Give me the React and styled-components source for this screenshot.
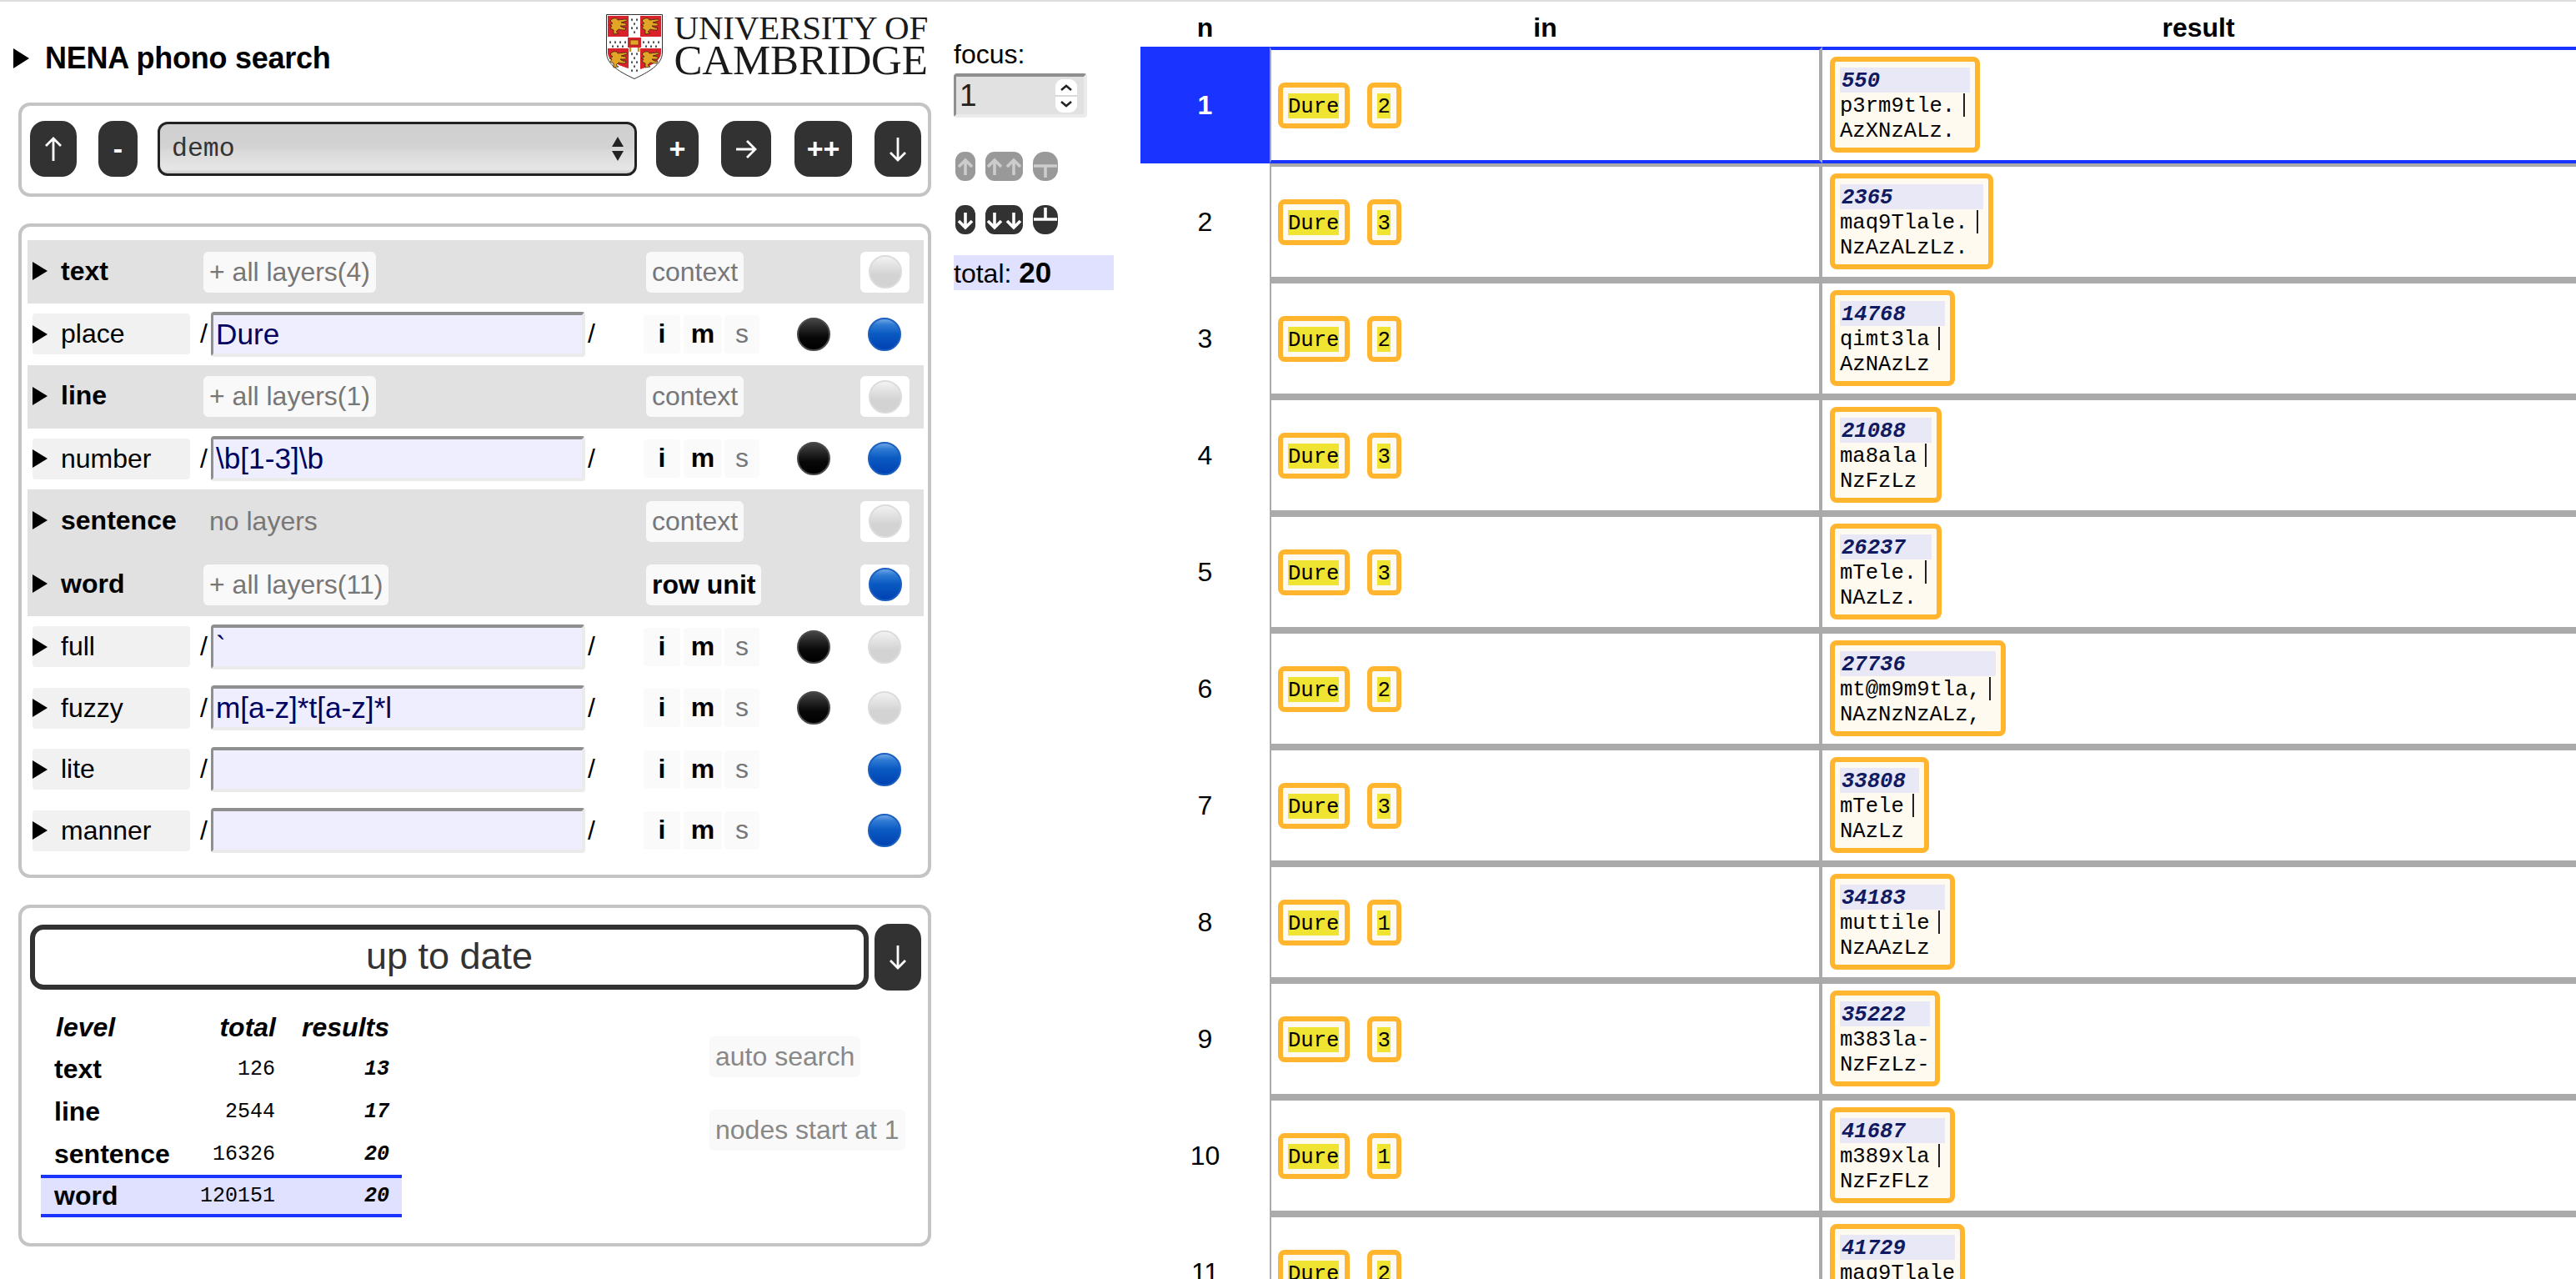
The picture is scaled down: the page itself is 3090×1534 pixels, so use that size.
import React from 'react';
import styled, { createGlobalStyle } from 'styled-components';

const SANS = '"Liberation Sans", Arial, sans-serif';
const MONO = '"Liberation Mono", "Courier New", monospace';
const SERIF = '"Liberation Serif", "Times New Roman", serif';

const Global = createGlobalStyle`
  html, body { margin: 0; padding: 0; background: #fff; overflow: hidden; }
  body { font-family: ${SANS}; color: #000; }
  #root { height: 1534px; overflow: hidden; }
`;

const Page = styled.div`
  display: flex;
  height: 1534px;
  box-sizing: border-box;
  border-top: 2px solid #ddd;
  overflow: hidden;
`;

const LeftCol = styled.div`
  width: 1144px;
  flex: none;
`;

const Header = styled.header`
  display: flex;
  justify-content: space-between;
  height: 121px;
  box-sizing: border-box;
  padding: 15px 31px 0 16px;
`;

const Triangle = styled.span`
  display: block;
  flex: none;
  width: 0;
  height: 0;
  border-left: ${p => p.$w || 18}px solid #000;
  border-top: ${p => p.$h || 11}px solid transparent;
  border-bottom: ${p => p.$h || 11}px solid transparent;
`;

const Title = styled.h1`
  display: flex;
  align-items: center;
  gap: 19px;
  margin: 13px 0 0;
  height: 80px;
  font-size: 36px;
  line-height: 80px;
  font-weight: 700;
  letter-spacing: -0.25px;
`;

const Logo = styled.div`
  display: flex;
  gap: 13px;
  height: 78px;
`;

const LogoText = styled.div`
  display: flex;
  flex-direction: column;
  font-family: ${SERIF};
  color: #1a1a1a;
`;

const LogoTop = styled.span`
  font-size: 41px;
  line-height: 32px;
  height: 34px;
  letter-spacing: -0.2px;
  white-space: nowrap;
`;

const LogoBottom = styled.span`
  font-size: 51px;
  line-height: 46px;
  height: 46px;
  letter-spacing: -0.2px;
  white-space: nowrap;
`;

const Panel = styled.section`
  box-sizing: border-box;
  width: 1095px;
  margin-left: 22px;
  border: 4px solid #c4c4c4;
  border-radius: 14px;
  background: #fff;
`;

const NavPanel = styled(Panel)`
  height: 113px;
  display: flex;
  align-items: center;
  padding: 0 0 2px 10px;
  margin-bottom: 32px;
`;

const SearchPanel = styled(Panel)`
  height: 785px;
  padding: 16px 5px 0 7px;
  margin-bottom: 32px;
`;

const StatusPanel = styled(Panel)`
  height: 410px;
  padding: 19px 8px 0 10px;
`;

const DarkBtn = styled.button`
  display: flex;
  align-items: center;
  justify-content: center;
  flex: none;
  width: ${p => p.$w}px;
  height: ${p => p.$h || 67}px;
  margin-left: ${p => p.$ml || 0}px;
  padding: 0;
  border: 0;
  border-radius: 18px;
  background: #323232;
  color: #fff;
  font-family: ${SANS};
  font-size: 34px;
  font-weight: 700;
`;

const SelectBox = styled.div`
  display: flex;
  align-items: center;
  justify-content: space-between;
  box-sizing: border-box;
  flex: none;
  width: 575px;
  height: 65px;
  margin-left: ${p => p.$ml}px;
  padding: 0 13px 0 14px;
  border: 3px solid #222;
  border-radius: 12px;
  background: linear-gradient(#cfcfcf 0%, #d3d3d3 48%, #dadada 55%, #e6e6e6 92%, #c9c9c9 100%);
  font-family: ${MONO};
  font-size: 31.5px;
  color: #333;
`;

const SelectArrows = styled.span`
  display: flex;
  flex-direction: column;
  gap: 5px;
`;

const ArrowUp = styled.span`
  display: block;
  width: 0;
  height: 0;
  border-left: 7px solid transparent;
  border-right: 7px solid transparent;
  border-bottom: 12px solid #222;
`;

const ArrowDown = styled(ArrowUp)`
  border-bottom: 0;
  border-top: 12px solid #222;
`;

const BandRow = styled.div`
  display: grid;
  grid-template-columns: 205px 531px 257px 59px;
  align-items: center;
  height: 76px;
  padding-left: 6px;
  background: #e1e1e1;
`;

const BandName = styled.div`
  display: flex;
  align-items: center;
  gap: 16px;
  font-size: 32px;
  font-weight: 700;
  margin-top: -2px;
`;

const PaleBox = styled.span`
  justify-self: start;
  box-sizing: border-box;
  height: 49px;
  padding: 0 7px;
  border-radius: 6px;
  background: ${p => (p.$plain ? 'transparent' : '#f9f9f9')};
  color: ${p => (p.$on ? '#000' : '#777')};
  font-size: 32px;
  font-weight: ${p => (p.$on ? 700 : 400)};
  line-height: 49px;
  white-space: nowrap;
`;

const RadioBox = styled.span`
  display: flex;
  align-items: center;
  justify-content: center;
  width: 59px;
  height: 49px;
  border-radius: 6px;
  background: #fff;
`;

const tones = {
  black: 'border-color:#4a4a4a;background:linear-gradient(#444 0%,#2a2a2a 25%,#080808 60%,#000 100%);',
  blue: 'border-color:#1b5fc0;background:linear-gradient(#6ea5e4 0%,#2f7bd4 18%,#0a5ac2 48%,#0042b2 100%);',
  grey: 'border-color:#dcdcdc;background:linear-gradient(#f2f2f2 0%,#e2e2e2 30%,#d3d3d3 60%,#d3d3d3 100%);',
};

const Radio = styled.span`
  display: block;
  flex: none;
  box-sizing: border-box;
  width: 40px;
  height: 40px;
  border-radius: 50%;
  border: 2px solid;
  ${p => tones[p.$tone]}
  visibility: ${p => (p.$tone ? 'visible' : 'hidden')};
`;

const LayerRowEl = styled.div`
  display: grid;
  grid-template-columns: 189px 25px 449px 70px 44px 50px 45px 85px 85px;
  align-items: center;
  height: 73.5px;
  padding-left: 6px;
`;

const LayerName = styled.div`
  display: flex;
  align-items: center;
  gap: 16px;
  box-sizing: border-box;
  height: 49px;
  border-radius: 4px;
  background: #f1f1f1;
  font-size: 32px;
`;

const Slash = styled.span`
  font-size: 32px;
  justify-self: ${p => (p.$end ? 'end' : 'start')};
  padding: ${p => (p.$end ? '0 4px 0 0' : '0 0 0 3px')};
`;

const Field = styled.div`
  box-sizing: border-box;
  height: 54px;
  padding: 0 0 0 3px;
  border-style: solid;
  border-width: 4px 4px 4px 3px;
  border-color: #8f8f8f #ebebeb #ebebeb #8f8f8f;
  border-radius: 4px;
  background: #eef;
  color: #00005f;
  font-size: 35.2px;
  line-height: 46px;
  white-space: nowrap;
  overflow: hidden;
`;

const Flag = styled.span`
  display: block;
  text-align: center;
  width: ${p => p.$w}px;
  height: 46px;
  line-height: 45px;
  justify-self: end;
  background: #fafafa;
  border-radius: 4px;
  font-size: 32px;
  font-weight: ${p => (p.$off ? 400 : 700)};
  color: ${p => (p.$off ? '#777' : '#000')};
`;

const RadioCell = styled.span`
  display: flex;
  justify-content: flex-end;
`;

const StatusBar = styled.div`
  display: flex;
  align-items: center;
  gap: 7px;
  height: 80px;
`;

const StatusBox = styled.div`
  flex: 1;
  box-sizing: border-box;
  height: 78px;
  border: 6px solid #323232;
  border-radius: 16px;
  color: #333;
  font-size: 45px;
  line-height: 64px;
  text-align: center;
`;

const StatusBody = styled.div`
  display: flex;
  align-items: flex-start;
  margin-top: 19px;
  margin-left: 13px;
`;

const Stats = styled.div`
  width: 433px;
  flex: none;
`;

const StatRow = styled.div`
  display: grid;
  grid-template-columns: 170px 96px 136px;
  align-items: center;
  box-sizing: border-box;
  height: ${p => (p.$active ? 51 : 50.6)}px;
  padding-left: 16px;
  border-style: solid;
  border-width: ${p => (p.$active ? 4 : 0)}px 0;
  border-color: #1a33ff;
  background: ${p => (p.$active ? '#e0e0ff' : 'transparent')};
`;

const StatHead = styled.span`
  font-size: 32px;
  font-style: italic;
  font-weight: 700;
  text-align: ${p => (p.$left ? 'left' : 'right')};
  padding-left: ${p => (p.$left ? 2 : 0)}px;
  white-space: nowrap;
`;

const StatLabel = styled.span`
  font-size: 32px;
  font-weight: 700;
`;

const StatNum = styled.span`
  font-family: ${MONO};
  font-size: 25px;
  text-align: right;
  padding-right: 1px;
`;

const StatRes = styled(StatNum)`
  font-weight: 700;
  font-style: italic;
  padding-right: 0;
`;

const Options = styled.div`
  display: flex;
  flex-direction: column;
  align-items: flex-start;
  gap: 39px;
  margin-left: 369px;
  margin-top: 36px;
`;

const OptionBox = styled(PaleBox)`
  color: #888;
  background: #f9f9f9;
`;

const FocusCol = styled.div`
  width: 224px;
  flex: none;
  box-sizing: border-box;
  padding-top: 44px;
`;

const FocusLabel = styled.div`
  font-size: 32px;
  line-height: 38px;
`;

const FocusInput = styled.div`
  display: flex;
  align-items: center;
  justify-content: space-between;
  box-sizing: border-box;
  width: 160px;
  height: 53px;
  margin-top: 4px;
  padding: 0 8px 0 4px;
  border-style: solid;
  border-width: 4px 4px 4px 3px;
  border-color: #8f8f8f #ebebeb #ebebeb #8f8f8f;
  border-radius: 4px;
  background: #e1e1e1;
  color: #222;
  font-size: 37px;
`;

const SpinBox = styled.svg`
  display: block;
  flex: none;
`;

const IconRow = styled.div`
  display: flex;
  gap: 12px;
  margin: ${p => p.$mt}px 0 0 2px;
`;

const IconPill = styled.svg`
  display: block;
  flex: none;
`;

const Total = styled.div`
  width: 192px;
  height: 42px;
  margin-top: 25px;
  background: #e0e0ff;
  font-size: 32px;
  line-height: 42px;
  white-space: nowrap;
`;

const TotalNum = styled.b`
  font-size: 35px;
`;

const ResultsCol = styled.div`
  flex: 1;
  min-width: 0;
`;

const HeadRow = styled.div`
  display: grid;
  grid-template-columns: 155px 661px 1fr;
  height: 54px;
  font-size: 32px;
  font-weight: 700;
  line-height: 63px;
  text-align: center;
`;

const ResultRow = styled.div`
  display: grid;
  grid-template-columns: 155px 663px 1fr;
  height: 140px;
`;

const NCell = styled.div`
  display: flex;
  align-items: center;
  justify-content: center;
  font-size: 32px;
  font-weight: ${p => (p.$focus ? 700 : 400)};
  color: ${p => (p.$focus ? '#fff' : '#000')};
  background: ${p => (p.$focus ? '#1a33ff' : '#fff')};
`;

const InCell = styled.div`
  display: flex;
  align-items: center;
  gap: 21px;
  box-sizing: border-box;
  padding: 1px 0 0 8px;
  border-style: solid;
  border-width: 4px 4px 4px 2px;
  border-color: ${p => (p.$focus ? '#1a33ff' : '#aaa')} #aaa;
`;

const ResCell = styled.div`
  display: flex;
  align-items: center;
  box-sizing: border-box;
  padding: 0 0 1px 9px;
  border-style: solid;
  border-width: 4px 0;
  border-color: ${p => (p.$focus ? '#1a33ff' : '#aaa')};
`;

const Node = styled.div`
  box-sizing: border-box;
  padding: 7px ${p => (p.$result ? 6 : 7)}px 6px 6px;
  border: 6px solid #ffb52e;
  border-radius: 8px;
  background: #fffaf0;
  font-family: ${MONO};
  font-size: 25.6px;
  white-space: nowrap;
`;

const Hit = styled.div`
  background: #f0e432;
  height: 30px;
  line-height: 33px;
`;

const NodeNum = styled.div`
  height: 30px;
  line-height: 34px;
  padding-left: 2px;
  background: #e8e8f6;
  color: #101a60;
  font-weight: 700;
  font-style: italic;
`;

const WordLine = styled.div`
  height: 30px;
  line-height: 34px;
`;

const WordSep = styled.span`
  display: inline-block;
  width: 2px;
  height: 28px;
  margin: 0 6px 0 10px;
  background: #222;
  vertical-align: -6px;
`;

const WhiteArrow = ({ dir }) => (
  <svg width="26" height="30" viewBox="0 0 26 30" fill="none" stroke="#fff" strokeWidth="2.8">
    {dir === 'up' && <path d="M13 29V2M4 11L13 2l9 9" />}
    {dir === 'down' && <path d="M13 1v27M4 19l9 9 9-9" />}
    {dir === 'right' && <path d="M1 15h23M14 5l10 10-10 10" />}
  </svg>
);

const SmallIcon = ({ kind, dim }) => {
  const bg = dim ? '#999' : '#323232';
  const fg = dim ? '#ccc' : '#fff';
  const up = x => `M${x} 28V10M${x - 8} 18L${x} 10l8 8`;
  const down = x => `M${x} 9v18M${x - 8} 19l8 8 8-8`;
  if (kind === 'one') {
    return (
      <IconPill width="24" height="35" viewBox="0 0 24 35">
        <rect width="24" height="35" rx="11" fill={bg} />
        <path d={dim ? up(12) : down(12)} stroke={fg} strokeWidth="3.6" fill="none" />
      </IconPill>
    );
  }
  if (kind === 'two') {
    return (
      <IconPill width="45" height="35" viewBox="0 0 45 35">
        <rect width="45" height="35" rx="11" fill={bg} />
        <path d={dim ? `${up(11)}${up(34)}` : `${down(11)}${down(34)}`} stroke={fg} strokeWidth="3.6" fill="none" />
      </IconPill>
    );
  }
  return (
    <IconPill width="30" height="35" viewBox="0 0 30 35">
      <rect width="30" height="35" rx="14" fill={bg} />
      <path d={dim ? 'M1 17h28M15 17v14' : 'M1 17h28M15 3v14'} stroke={fg} strokeWidth="3.6" fill="none" />
    </IconPill>
  );
};

const Lion = ({ x, y }) => (
  <g transform={`translate(${x} ${y})`}>
    <path
      d="M3 4c2-3 7-3 8 0l9-1c2 0 3 1 2 2l-7 2 5 1c2 1 1 2 0 3l-6 0c2 2 5 3 7 2l-1 3c-2 0-5 0-8-1l-3 3 3 2-6 1 0-5-4-2 2-3-3-1 4-2-3-3z"
      fill="#e2a526"
      stroke="#3a2a10"
      strokeWidth="0.8"
    />
  </g>
);

const Ermine = ({ x, y }) => <path d={`M${x} ${y - 1.6}l1 2.6-1 1.6-1-1.6z`} fill="#222" />;

const Shield = () => {
  const spots = [
    [31, 6], [37, 6], [34, 11], [31, 16], [37, 16], [34, 21],
    [31, 47], [37, 47], [34, 52], [31, 57], [37, 57], [34, 62], [31, 67], [37, 67],
    [5, 33], [11, 33], [17, 33], [23, 33], [8, 38], [14, 38], [20, 38],
    [45, 33], [51, 33], [57, 33], [63, 33], [48, 38], [54, 38], [60, 38],
  ];
  return (
    <svg width="68" height="78" viewBox="0 0 68 78">
      <path d="M.5.5h67V46c0 15-18 24-33.500 31.500C18 70 .5 61 .5 46z" fill="#fff" stroke="#333" strokeWidth="1" />
      <path d="M2 2h25v25H2zM41 2h25v25H41z" fill="#d8232a" />
      <path d="M2 41h25v24c-10-3-25-8-25-19zM41 41h25v5c0 11-15 17-25 20z" fill="#d8232a" />
      <Lion x="3" y="3" />
      <Lion x="41" y="3" />
      <Lion x="3" y="43" />
      <Lion x="41" y="43" />
      {spots.map(([x, y]) => <Ermine key={`${x}-${y}`} x={x} y={y} />)}
      <rect x="26" y="28" width="16" height="12" fill="#d8232a" />
      <rect x="29" y="31" width="10" height="6" fill="#e2a526" stroke="#6b1d10" strokeWidth="0.6" />
      <path d="M29 40v5M39 40v5" stroke="#c78e1e" strokeWidth="2.4" />
    </svg>
  );
};

const Band = ({ name, layers, plain, unit, tone }) => (
  <BandRow>
    <BandName><Triangle />{name}</BandName>
    <PaleBox $plain={plain}>{layers}</PaleBox>
    <PaleBox $on={unit}>{unit ? 'row unit' : 'context'}</PaleBox>
    <RadioBox><Radio $tone={tone} /></RadioBox>
  </BandRow>
);

const Layer = ({ name, value, black, tone }) => (
  <LayerRowEl>
    <LayerName><Triangle />{name}</LayerName>
    <Slash $end>/</Slash>
    <Field role="textbox">{value}</Field>
    <Slash>/</Slash>
    <Flag $w={44}>i</Flag>
    <Flag $w={46}>m</Flag>
    <Flag $w={42} $off>s</Flag>
    <RadioCell><Radio $tone={black ? 'black' : undefined} /></RadioCell>
    <RadioCell><Radio $tone={tone} /></RadioCell>
  </LayerRowEl>
);

const rows = [
  [2, '550', 'p3rm9tle.', 'AzXNzALz.', true],
  [3, '2365', 'maq9Tlale.', 'NzAzALzLz.', true],
  [2, '14768', 'qimt3la', 'AzNAzLz', true],
  [3, '21088', 'ma8ala', 'NzFzLz', true],
  [3, '26237', 'mTele.', 'NAzLz.', true],
  [2, '27736', 'mt@m9m9tla,', 'NAzNzNzALz,', true],
  [3, '33808', 'mTele', 'NAzLz', true],
  [1, '34183', 'muttile', 'NzAAzLz', true],
  [3, '35222', 'm383la-', 'NzFzLz-', false],
  [1, '41687', 'm389xla', 'NzFzFLz', true],
  [2, '41729', 'maq9Tlale', 'NzAzALzLz', false],
];

const stats = [
  ['text', '126', '13'],
  ['line', '2544', '17'],
  ['sentence', '16326', '20'],
  ['word', '120151', '20'],
];

export default function App() {
  return (
    <>
      <Global />
      <Page>
        <LeftCol>
          <Header>
            <Title><Triangle $w={19} $h={12} />NENA phono search</Title>
            <Logo>
              <Shield />
              <LogoText>
                <LogoTop>UNIVERSITY OF</LogoTop>
                <LogoBottom>CAMBRIDGE</LogoBottom>
              </LogoText>
            </Logo>
          </Header>

          <NavPanel>
            <DarkBtn $w={56}><WhiteArrow dir="up" /></DarkBtn>
            <DarkBtn $w={47} $ml={26}>-</DarkBtn>
            <SelectBox $ml={24}>
              demo
              <SelectArrows><ArrowUp /><ArrowDown /></SelectArrows>
            </SelectBox>
            <DarkBtn $w={51} $ml={23}>+</DarkBtn>
            <DarkBtn $w={60} $ml={27}><WhiteArrow dir="right" /></DarkBtn>
            <DarkBtn $w={69} $ml={28}>++</DarkBtn>
            <DarkBtn $w={56} $ml={27}><WhiteArrow dir="down" /></DarkBtn>
          </NavPanel>

          <SearchPanel>
            <Band name="text" layers="+ all layers(4)" tone="grey" />
            <Layer name="place" value="Dure" black tone="blue" />
            <Band name="line" layers="+ all layers(1)" tone="grey" />
            <Layer name="number" value="\b[1-3]\b" black tone="blue" />
            <Band name="sentence" layers="no layers" plain tone="grey" />
            <Band name="word" layers="+ all layers(11)" unit tone="blue" />
            <Layer name="full" value="`" black tone="grey" />
            <Layer name="fuzzy" value="m[a-z]*t[a-z]*l" black tone="grey" />
            <Layer name="lite" value="" tone="blue" />
            <Layer name="manner" value="" tone="blue" />
          </SearchPanel>

          <StatusPanel>
            <StatusBar>
              <StatusBox>up to date</StatusBox>
              <DarkBtn $w={56} $h={80}><WhiteArrow dir="down" /></DarkBtn>
            </StatusBar>
            <StatusBody>
              <Stats>
                <StatRow>
                  <StatHead $left>level</StatHead>
                  <StatHead>total</StatHead>
                  <StatHead>results</StatHead>
                </StatRow>
                {stats.map(([level, total, res]) => (
                  <StatRow key={level} $active={level === 'word'}>
                    <StatLabel>{level}</StatLabel>
                    <StatNum>{total}</StatNum>
                    <StatRes>{res}</StatRes>
                  </StatRow>
                ))}
              </Stats>
              <Options>
                <OptionBox>auto search</OptionBox>
                <OptionBox>nodes start at 1</OptionBox>
              </Options>
            </StatusBody>
          </StatusPanel>
        </LeftCol>

        <FocusCol>
          <FocusLabel>focus:</FocusLabel>
          <FocusInput>
            1
            <SpinBox width="26" height="40" viewBox="0 0 26 40">
              <rect width="26" height="40" rx="9" fill="#fff" />
              <path d="M0 20h26" stroke="#ccc" strokeWidth="1.500" />
              <path d="M7 13l6-5 6 5M7 27l6 5 6-5" stroke="#222" strokeWidth="2.500" fill="none" />
            </SpinBox>
          </FocusInput>
          <IconRow $mt={41}>
            <SmallIcon kind="one" dim />
            <SmallIcon kind="two" dim />
            <SmallIcon kind="bar" dim />
          </IconRow>
          <IconRow $mt={29}>
            <SmallIcon kind="one" />
            <SmallIcon kind="two" />
            <SmallIcon kind="bar" />
          </IconRow>
          <Total>total: <TotalNum>20</TotalNum></Total>
        </FocusCol>

        <ResultsCol>
          <HeadRow>
            <span>n</span>
            <span>in</span>
            <span>result</span>
          </HeadRow>
          {rows.map(([num, id, word, tag, sep], i) => (
            <ResultRow key={id}>
              <NCell $focus={i === 0}>{i + 1}</NCell>
              <InCell $focus={i === 0}>
                <Node><Hit>Dure</Hit></Node>
                <Node><Hit>{num}</Hit></Node>
              </InCell>
              <ResCell $focus={i === 0}>
                <Node $result>
                  <NodeNum>{id}</NodeNum>
                  <WordLine>{word}{sep && <WordSep />}</WordLine>
                  <WordLine>{tag}</WordLine>
                </Node>
              </ResCell>
            </ResultRow>
          ))}
        </ResultsCol>
      </Page>
    </>
  );
}
